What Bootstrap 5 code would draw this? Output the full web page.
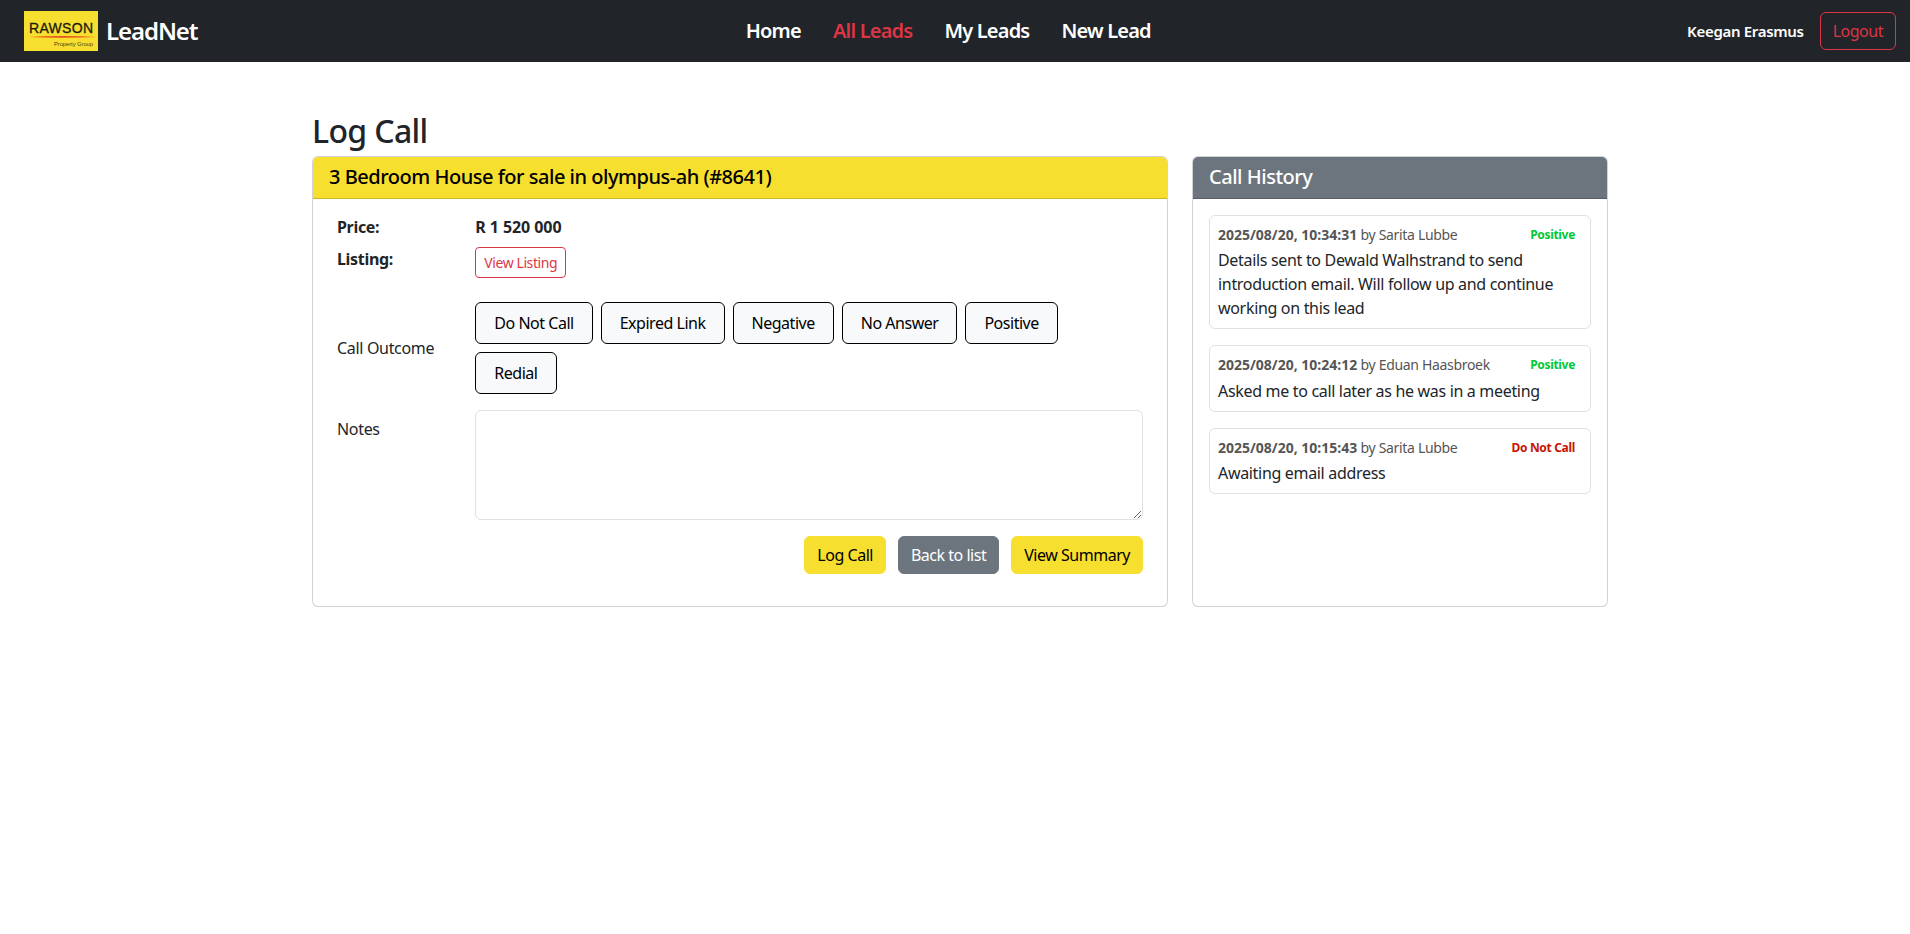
<!DOCTYPE html>
<html lang="en">
<head>
    <meta charset="UTF-8">
    <title>Log Call</title>
    <link href="https://cdn.jsdelivr.net/npm/bootstrap@5.3.0/dist/css/bootstrap.min.css" rel="stylesheet">
    <style>
        body { font-family: "Noto Sans", "Liberation Sans", sans-serif; letter-spacing: -.02em; }
        .btn { letter-spacing: -.03em; }
        .top-bar { height: 62px; padding: 0; }
        .top-inner { padding-left: 24px; padding-right: 14px; }
        .brand-logo { display: block; margin-right: 8px; }
        .brand-logo text { letter-spacing: 0; }
        .navbar-brand { font-size: 24px; font-weight: 600; letter-spacing: -.045em; padding: 0; margin: 0; }
        .main-links { margin-left: 12px; }
        .main-links .nav-link { font-size: 20px; font-weight: 600; letter-spacing: -.04em; color: #fff; padding: 8px 16px; }
        .main-links .nav-link.active { color: #dc3545; }
        .user-name { font-size: 15px; font-weight: 600; color: #fff; }
        .page-wrap { padding-left: 10px; }
        .page-title { font-size: 32px; font-weight: 500; letter-spacing: -.02em; padding-top: 2px; margin-bottom: 6px; }
        .rawson-yellow { background: #f7df30; color: #000; }
        .head-title { font-size: 20px; font-weight: 500; letter-spacing: -.024em; line-height: 24.5px; }
        .log-body { padding: 16px 24px 32.5px; }
        .info-line { font-weight: 700; margin-bottom: 8px; }
        .info-line .col-2, .info-line .col-10 { min-height: 24px; }
        .price-value { letter-spacing: -.005em; }
        .outcome-btn { background: #f8f9fa; border-color: #000; color: #000; padding: 8px 18px; }
        .outcome-btn:hover { background: #e9ecef; border-color: #000; color: #000; }
        .note-box { height: 110px; }
        .action-row { column-gap: 12px; }
        .btn-rawson { background: #f7df30; border-color: #f7df30; color: #000; }
        .history-item { border: 1px solid #dee2e6; border-radius: 6px; padding: 8px; margin-bottom: 16px; }
        .history-head { font-size: 14px; line-height: 21px; padding-bottom: 3.5px; color: #555; }
        .history-head b { letter-spacing: 0; }
        .history-status { font-size: 12px; font-weight: 700; margin-right: 7px; }
        .status-good { color: #00c832; }
        .status-bad { color: #c81400; }
    </style>
</head>
<body>
<nav class="navbar navbar-dark bg-dark top-bar">
    <div class="container-fluid top-inner">
        <div class="d-flex align-items-center">
            <svg class="brand-logo" width="74" height="40" viewBox="0 0 74 40">
                <rect width="74" height="40" fill="#f7df30"/>
                <text x="5" y="22" font-family="Liberation Sans" font-size="14" fill="#1d1a0e" stroke="#1d1a0e" stroke-width=".3" textLength="64">RAWSON</text>
                <path d="M4 26 Q37 24 73 26 Q37 27.400 4 26Z" fill="#e8501c"/>
                <text x="30" y="34.500" font-family="Liberation Sans" font-size="5.800" fill="#4d4416" textLength="39">Property Group</text>
            </svg>
            <a class="navbar-brand" href="#">LeadNet</a>
        </div>
        <ul class="nav main-links">
            <li class="nav-item"><a class="nav-link" href="#">Home</a></li>
            <li class="nav-item"><a class="nav-link active" href="#">All Leads</a></li>
            <li class="nav-item"><a class="nav-link" href="#">My Leads</a></li>
            <li class="nav-item"><a class="nav-link" href="#">New Lead</a></li>
        </ul>
        <div class="d-flex align-items-center gap-3">
            <span class="user-name">Keegan Erasmus</span>
            <a class="btn btn-outline-danger" href="#">Logout</a>
        </div>
    </div>
</nav>

<div class="page-wrap">
    <div class="container mt-5">
        <h2 class="page-title">Log Call</h2>
        <div class="row">
            <div class="col-8">
                <div class="card h-100">
                    <div class="card-header rawson-yellow head-title">3 Bedroom House for sale in olympus-ah (#8641)</div>
                    <div class="log-body">
                        <div class="row info-line">
                            <div class="col-2">Price:</div>
                            <div class="col-10 price-value">R 1 520 000</div>
                        </div>
                        <div class="row info-line mb-4">
                            <div class="col-2">Listing:</div>
                            <div class="col-10"><a class="btn btn-sm btn-outline-danger" href="#">View Listing</a></div>
                        </div>
                        <div class="row align-items-center mb-3">
                            <div class="col-2">Call Outcome</div>
                            <div class="col-10 d-flex flex-wrap gap-2">
                                <button type="button" class="btn outcome-btn">Do Not Call</button>
                                <button type="button" class="btn outcome-btn">Expired Link</button>
                                <button type="button" class="btn outcome-btn">Negative</button>
                                <button type="button" class="btn outcome-btn">No Answer</button>
                                <button type="button" class="btn outcome-btn">Positive</button>
                                <button type="button" class="btn outcome-btn">Redial</button>
                            </div>
                        </div>
                        <div class="row mb-3">
                            <label class="col-2 col-form-label" for="notes">Notes</label>
                            <div class="col-10"><textarea class="form-control note-box" id="notes"></textarea></div>
                        </div>
                        <div class="d-flex justify-content-end action-row">
                            <button type="button" class="btn btn-rawson">Log Call</button>
                            <a class="btn btn-secondary" href="#">Back to list</a>
                            <a class="btn btn-rawson" href="#">View Summary</a>
                        </div>
                    </div>
                </div>
            </div>
            <div class="col-4">
                <div class="card h-100">
                    <div class="card-header text-bg-secondary head-title">Call History</div>
                    <div class="card-body">
                        <div class="history-item">
                            <div class="d-flex justify-content-between align-items-center history-head">
                                <span><b>2025/08/20, 10:34:31</b> by Sarita Lubbe</span>
                                <span class="history-status status-good">Positive</span>
                            </div>
                            Details sent to Dewald Walhstrand to send introduction email. Will follow up and continue working on this lead
                        </div>
                        <div class="history-item">
                            <div class="d-flex justify-content-between align-items-center history-head">
                                <span><b>2025/08/20, 10:24:12</b> by Eduan Haasbroek</span>
                                <span class="history-status status-good">Positive</span>
                            </div>
                            Asked me to call later as he was in a meeting
                        </div>
                        <div class="history-item">
                            <div class="d-flex justify-content-between align-items-center history-head">
                                <span><b>2025/08/20, 10:15:43</b> by Sarita Lubbe</span>
                                <span class="history-status status-bad">Do Not Call</span>
                            </div>
                            Awaiting email address
                        </div>
                    </div>
                </div>
            </div>
        </div>
    </div>
</div>
<script src="https://cdn.jsdelivr.net/npm/bootstrap@5.3.0/dist/js/bootstrap.bundle.min.js"></script>
</body>
</html>
